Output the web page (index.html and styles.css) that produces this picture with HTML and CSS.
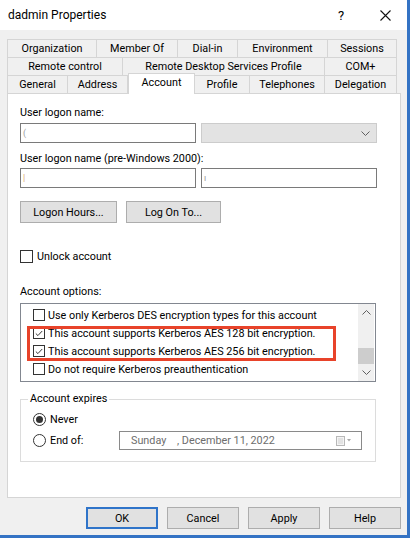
FILE: index.html
```html
<!DOCTYPE html>
<html>
<head>
  <meta charset="utf-8"/>
  <title>dadmin Properties</title>
  <link rel="stylesheet" href="styles.css">
</head>
<body>
  <div class="dialog">
    <div class="title-bar">
      <span class="title-text">dadmin Properties</span>
      <span class="title-help">?</span>
      <span class="title-close">
        <svg width="11" height="11" viewBox="0 0 11 11"><path d="M0.5 0.5 L10.5 10.5 M10.5 0.5 L0.5 10.5" stroke="#111" stroke-width="1.1" fill="none"/></svg>
      </span>
    </div>

    <div class="tab-strip">
      <div class="tab-row tab-row-1">
        <div class="tab">Organization</div>
        <div class="tab">Member Of</div>
        <div class="tab">Dial-in</div>
        <div class="tab">Environment</div>
        <div class="tab">Sessions</div>
      </div>
      <div class="tab-row tab-row-2">
        <div class="tab">Remote control</div>
        <div class="tab">Remote Desktop Services Profile</div>
        <div class="tab">COM+</div>
      </div>
      <div class="tab-row tab-row-3">
        <div class="tab">General</div>
        <div class="tab">Address</div>
        <div class="tab active">Account</div>
        <div class="tab">Profile</div>
        <div class="tab">Telephones</div>
        <div class="tab">Delegation</div>
      </div>
    </div>

    <div class="tab-panel">
      <div class="field-label">User logon name:</div>
      <div class="field-row">
        <div class="textbox"><span class="caret-mark">(</span></div>
        <div class="combo disabled">
          <svg width="9" height="5" viewBox="0 0 9 5"><path d="M0.5 0.5 L4.5 4.5 L8.5 0.5" stroke="#606060" fill="none"/></svg>
        </div>
      </div>

      <div class="field-label label-gap">User logon name (pre-Windows 2000):</div>
      <div class="field-row row-tight">
        <div class="textbox"><span class="caret-mark caret-orange">|</span></div>
        <div class="textbox"><span class="caret-mark">ı</span></div>
      </div>

      <div class="button-row">
        <button class="btn btn-hours">Logon Hours...</button>
        <button class="btn btn-logon">Log On To...</button>
      </div>

      <label class="check-row unlock-row">
        <span class="checkbox"></span>
        <span>Unlock account</span>
      </label>

      <div class="field-label options-label">Account options:</div>
      <div class="listbox">
        <div class="list-items">
          <div class="list-item"><span class="checkbox"></span>Use only Kerberos DES encryption types for this account</div>
          <div class="list-item"><span class="checkbox checked"><svg width="11" height="11" viewBox="0 0 11 11"><path d="M2 5.5 L4.3 7.8 L9 2.8" stroke="#333" stroke-width="1.1" fill="none"/></svg></span>This account supports Kerberos AES 128 bit encryption.</div>
          <div class="list-item"><span class="checkbox checked"><svg width="11" height="11" viewBox="0 0 11 11"><path d="M2 5.5 L4.3 7.8 L9 2.8" stroke="#333" stroke-width="1.1" fill="none"/></svg></span>This account supports Kerberos AES 256 bit encryption.</div>
          <div class="list-item"><span class="checkbox"></span>Do not require Kerberos preauthentication</div>
        </div>
        <div class="scrollbar">
          <div class="scroll-btn">
            <svg width="9" height="5" viewBox="0 0 9 5"><path d="M0.5 4.5 L4.5 0.5 L8.5 4.5" stroke="#606060" fill="none"/></svg>
          </div>
          <div class="scroll-track"></div>
          <div class="scroll-thumb"></div>
          <div class="scroll-btn">
            <svg width="9" height="5" viewBox="0 0 9 5"><path d="M0.5 0.5 L4.5 4.5 L8.5 0.5" stroke="#606060" fill="none"/></svg>
          </div>
        </div>
        <div class="highlight-box"></div>
      </div>

      <fieldset class="expires-group">
        <legend>Account expires</legend>
        <label class="radio-row">
          <span class="radio checked"></span>
          <span>Never</span>
        </label>
        <div class="radio-row end-row">
          <label class="radio-label">
            <span class="radio"></span>
            <span>End of:</span>
          </label>
          <div class="date-picker">
            <span class="date-text">Sunday    , December 11, 2022</span>
            <span class="date-icon">
              <svg width="18" height="10" viewBox="0 0 18 10"><rect x="0.5" y="0.5" width="8" height="9" fill="#f4f4f4" stroke="#b8b8b8"/><path d="M2 3 H7 M2 5 H7 M2 7 H7" stroke="#d0d0d0"/><path d="M11 3 L15 3 L13 5.5 Z" fill="#a8a8a8"/></svg>
            </span>
          </div>
        </div>
      </fieldset>
    </div>

    <div class="button-bar">
      <button class="btn btn-default">OK</button>
      <button class="btn">Cancel</button>
      <button class="btn">Apply</button>
      <button class="btn">Help</button>
    </div>
  </div>
</body>
</html>
```

FILE: styles.css
```css
html, body {
  margin: 0;
  padding: 0;
  background: #f0f0f0;
}

body {
  font-family: Roboto, "Liberation Sans", Arial, sans-serif;
  font-size: 10.8px;
  color: #000;
}

.dialog {
  width: 410px;
  height: 538px;
  box-sizing: border-box;
  background: #f0f0f0;
  border-right: 3px solid #3473c4;
  border-bottom: 3px solid #3473c4;
  display: flex;
  flex-direction: column;
}

/* title bar */

.title-bar {
  height: 30px;
  flex: none;
  background: #fff;
  display: flex;
  align-items: center;
  padding-left: 8px;
}

.title-text {
  font-size: 12px;
  flex: 1;
}

.title-help {
  font-size: 13px;
  width: 20px;
  text-align: center;
  margin-right: 29px;
}

.title-close {
  width: 11px;
  height: 11px;
  margin-right: 16px;
  display: flex;
}

/* tabs */

.tab-strip {
  margin: 9px 0 0 7px;
  width: 390px;
}

.tab-row {
  display: grid;
  height: 18px;
}

.tab-row-1 { grid-template-columns: 90px 81px 60px 90px 69px; }
.tab-row-2 { grid-template-columns: 116px 202px 72px; }
.tab-row-3 { grid-template-columns: 61px 60px 67px 55px 75px 72px; }

.tab {
  box-sizing: border-box;
  height: 18px;
  border-top: 1px solid #d5d5d5;
  border-right: 1px solid #d5d5d5;
  display: flex;
  align-items: center;
  justify-content: center;
  white-space: nowrap;
  background: #f0f0f0;
}

.tab:first-child {
  border-left: 1px solid #d5d5d5;
}

.tab.active {
  position: relative;
  z-index: 1;
  background: #fff;
  height: 21px;
  margin-top: -2px;
  border-left: 1px solid #d5d5d5;
  padding-bottom: 4px;
}

/* panel */

.tab-panel {
  margin-left: 7px;
  width: 394px;
  height: 405px;
  flex: none;
  box-sizing: border-box;
  background: #fff;
  border: 1px solid #d5d5d5;
  padding: 12px 0 0 12px;
}

.field-label {
  line-height: 14px;
  height: 14px;
}

.label-gap { margin-top: 9px; }

.field-row {
  display: flex;
  gap: 5px;
  margin-top: 3px;
}

.row-tight { margin-top: 2px; }

.textbox, .combo {
  width: 176px;
  height: 20px;
  box-sizing: border-box;
  border: 1px solid #7a7a7a;
  background: #fff;
  display: flex;
  align-items: center;
  padding-left: 2px;
}

.caret-mark {
  color: #9a9a9a;
  font-size: 9px;
}

.caret-orange { color: #d9a06a; }

.combo.disabled {
  background: #e3e3e3;
  border-color: #cccccc;
  justify-content: flex-end;
  padding-right: 6px;
}

.button-row {
  display: flex;
  gap: 9px;
  margin-top: 13px;
}

.btn {
  height: 22px;
  box-sizing: border-box;
  background: #e1e1e1;
  border: 1px solid #adadad;
  font-family: inherit;
  font-size: 10.8px;
  color: #000;
  padding: 0;
}

.btn-hours { width: 97px; }
.btn-logon { width: 95px; }

.check-row {
  display: flex;
  align-items: center;
  gap: 4px;
  height: 14px;
}

.unlock-row { margin-top: 26px; }

.checkbox {
  width: 13px;
  height: 13px;
  box-sizing: border-box;
  border: 1px solid #333;
  background: #fff;
  display: flex;
  align-items: center;
  justify-content: center;
  flex: none;
}

.options-label { margin-top: 22px; }

/* list box */

.listbox {
  position: relative;
  margin-top: 4px;
  width: 356px;
  height: 79px;
  box-sizing: border-box;
  border: 1px solid #828790;
  background: #fff;
  display: flex;
}

.list-items {
  flex: 1;
  padding: 2px 0 0 12px;
}

.list-item {
  height: 18px;
  display: flex;
  align-items: center;
  gap: 3px;
  white-space: nowrap;
}

.list-item .checkbox {
  width: 12px;
  height: 12px;
}

.scrollbar {
  width: 16px;
  margin-right: 1px;
  background: #f0f0f0;
  display: flex;
  flex-direction: column;
}

.scroll-btn {
  height: 17px;
  display: flex;
  align-items: center;
  justify-content: center;
}

.scroll-track { height: 27px; }

.scroll-thumb {
  height: 16px;
  background: #cdcdcd;
}

.highlight-box {
  position: absolute;
  left: 6px;
  top: 22px;
  width: 309px;
  height: 35px;
  box-sizing: border-box;
  border: 3px solid #e8432a;
}

/* account expires */

.expires-group {
  margin: 10px 0 0 0;
  width: 356px;
  height: 70px;
  box-sizing: border-box;
  border: 1px solid #dcdcdc;
  padding: 6px 0 0 12px;
}

.expires-group legend {
  padding: 0 2px;
  margin-left: -5px;
  line-height: 14px;
}

.radio-row {
  display: flex;
  align-items: center;
  gap: 4px;
  height: 14px;
}

.end-row {
  margin-top: 5px;
  height: 19px;
  gap: 0;
}

.radio-label {
  display: flex;
  align-items: center;
  gap: 4px;
  width: 86px;
}

.radio {
  width: 13px;
  height: 13px;
  box-sizing: border-box;
  border: 1px solid #333;
  border-radius: 50%;
  background: #fff;
  display: flex;
  align-items: center;
  justify-content: center;
  flex: none;
}

.radio.checked::after {
  content: "";
  width: 7px;
  height: 7px;
  border-radius: 50%;
  background: #333;
}

.date-picker {
  width: 243px;
  height: 19px;
  box-sizing: border-box;
  border: 1px solid #8a8a8a;
  background: #fff;
  display: flex;
  align-items: center;
  padding-left: 11px;
}

.date-text {
  flex: 1;
  color: #6d6d6d;
  white-space: pre;
}

.date-icon {
  display: flex;
  margin-right: 7px;
}

/* bottom buttons */

.button-bar {
  display: flex;
  justify-content: flex-end;
  gap: 9px;
  margin-top: 9px;
  padding-right: 6px;
}

.button-bar .btn {
  width: 72px;
}

.btn-default {
  border-color: #2f74c9;
  box-shadow: inset 0 0 0 1px #2f74c9;
}
```
